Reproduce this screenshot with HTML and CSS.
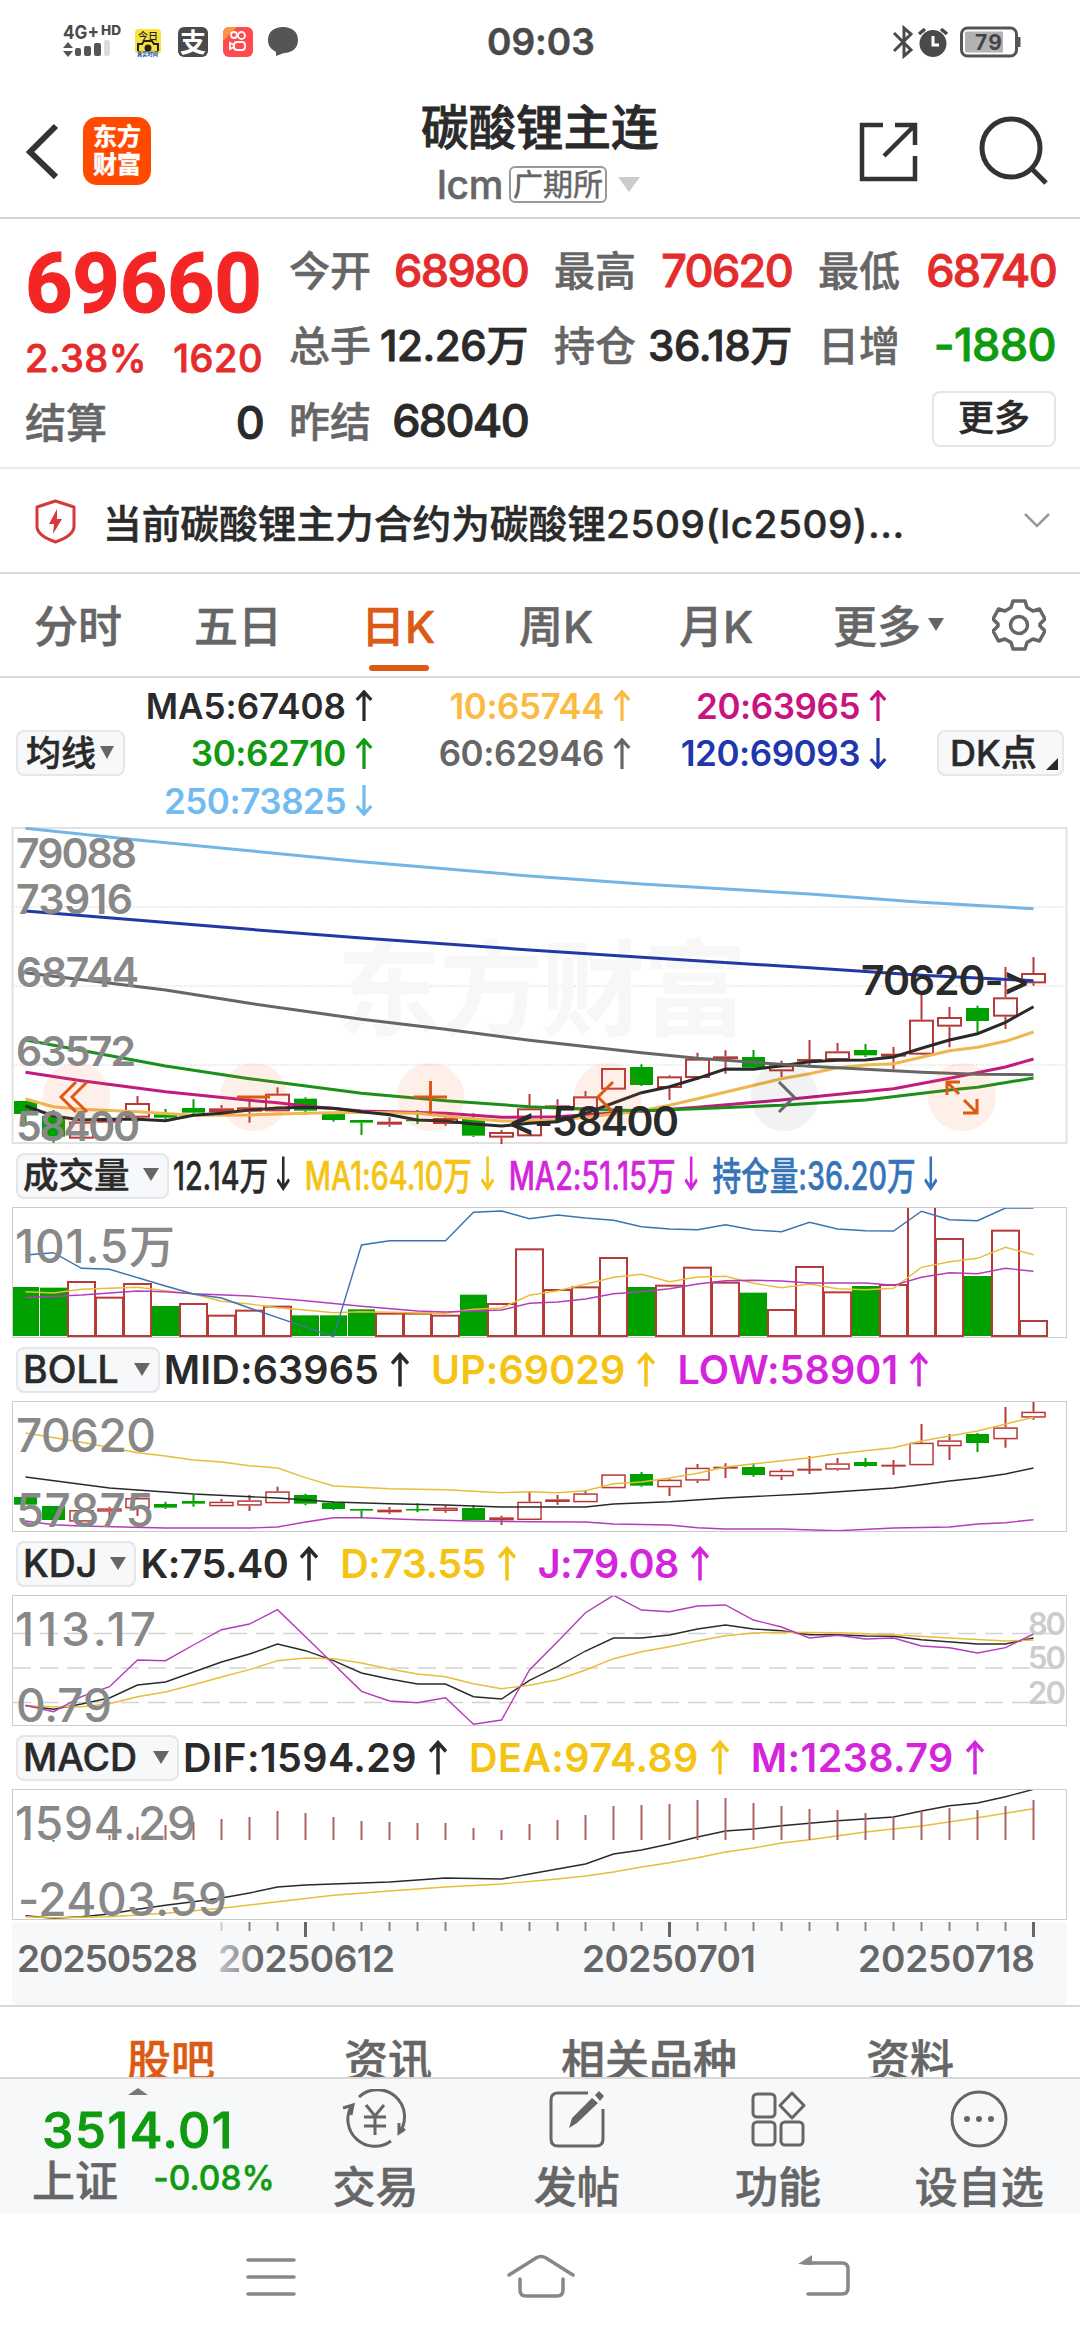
FILE: index.html
```html
<!DOCTYPE html>
<html lang="zh-CN">
<head>
  <meta charset="UTF-8">
  <meta name="viewport" content="width=device-width, initial-scale=1.0">
  <title>碳酸锂主连 - 东方财富</title>
  <link rel="stylesheet" href="styles.css">
</head>
<body>
  <svg class="defs">
    <symbol id="up" viewBox="0 0 18 34"><path d="M9 34V2M1 11L9 2L17 11"/></symbol>
    <symbol id="down" viewBox="0 0 18 34"><path d="M9 0V32M1 23L9 32L17 23"/></symbol>
  </svg>

  <div class="statusbar">
    <svg class="status-left" viewBox="62 18 240 42">
      <text class="st-net" x="63" y="39" textLength="36" lengthAdjust="spacingAndGlyphs">4G+</text>
      <text class="st-hd" x="101" y="35" textLength="20" lengthAdjust="spacingAndGlyphs">HD</text>
      <path fill="#555" d="M63 48L68 42L73 48zM63 51L68 57L73 51z"/>
      <rect x="75" y="48" width="6" height="8" rx="2" fill="#555"/>
      <rect x="84" y="46" width="7" height="10" rx="2" fill="#555"/>
      <rect x="94" y="43" width="7" height="13" rx="2" fill="#555"/>
      <rect x="104" y="40" width="6" height="16" rx="2" fill="#ddd"/>
      <rect x="135" y="29" width="26" height="25" rx="4" fill="#f7e23c"/>
      <text class="st-today" x="138" y="40">今日</text>
      <path d="M138 51v-7h4l2-3h8l2 3h4v7" fill="none" stroke="#222" stroke-width="2"/>
      <circle cx="148" cy="48" r="3.5" fill="#222"/>
      <text class="st-water" x="137" y="56" textLength="21" lengthAdjust="spacingAndGlyphs">真实时间</text>
      <rect x="178" y="27" width="30" height="30" rx="6" fill="#4a4a4a"/>
      <text class="st-pay" x="180" y="52">支</text>
      <rect x="223" y="27" width="30" height="30" rx="6" fill="#ff4a4e"/>
      <path d="M223 41V33a6 6 0 0 1 6-6h8z" fill="#ff9440"/>
      <g fill="none" stroke="#fff" stroke-width="1.8"><circle cx="234" cy="35" r="3"/><circle cx="241.500" cy="35.500" r="3.500"/><rect x="234" y="42" width="11" height="8" rx="3"/><path d="M234 45l-4-2v6l4-2"/></g>
      <path fill="#555" d="M283 27c9 0 15 5 15 13s-6 13-14 13l-8 3v-4c-5-3-8-6-8-12c0-8 6-13 15-13z"/>
    </svg>
    <div class="clock">09:03</div>
    <svg class="status-right" viewBox="892 18 130 42">
      <path d="M894 33l17 17l-7 6V28l7 6l-17 17" fill="none" stroke="#4a4a4a" stroke-width="3"/>
      <circle cx="933" cy="43.500" r="13.500" fill="#4a4a4a"/>
      <path d="M919 34l6-5M947 34l-6-5" stroke="#4a4a4a" stroke-width="3.500"/>
      <path d="M933 36v9h6" fill="none" stroke="#fff" stroke-width="3"/>
      <rect x="961.500" y="28" width="55" height="28" rx="6" fill="none" stroke="#555" stroke-width="3"/>
      <path d="M1003 31.500H967q-2 0-2 2v17q0 2 2 2h36z" fill="#b2b2b2"/>
      <rect x="1018" y="37" width="2.500" height="10" fill="#555"/>
      <text class="st-batt" x="975" y="50" textLength="27">79</text>
    </svg>
  </div>

  <div class="header">
    <svg class="back" viewBox="26 122 36 60"><path d="M56 126L30 152L56 177" fill="none" stroke="#333" stroke-width="6"/></svg>
    <div class="logo">东方<br>财富</div>
    <div class="title">
      <div class="name">碳酸锂主连</div>
      <div class="code">lcm<span class="market">广期所</span><span class="tri-light"></span></div>
    </div>
    <svg class="share" viewBox="855 120 62 62">
      <path d="M881 125H860V179H913V156M893 125H913V145M882 156L912 126" fill="none" stroke="#333" stroke-width="4.500"/>
    </svg>
    <svg class="search" viewBox="975 114 74 74">
      <circle cx="1009" cy="148" r="29" fill="none" stroke="#333" stroke-width="5"/>
      <path d="M1030 169L1044 183" stroke="#333" stroke-width="5"/>
    </svg>
  </div>

  <div class="quote">
    <div class="q-left">
      <div class="price">69660</div>
      <div class="change"><span>2.38%</span><span>1620</span></div>
      <div class="cell settle"><label>结算</label><b>0</b></div>
    </div>
    <div class="q-grid">
      <div class="cell"><label>今开</label><b class="red">68980</b></div>
      <div class="cell"><label>最高</label><b class="red">70620</b></div>
      <div class="cell"><label>最低</label><b class="red">68740</b></div>
      <div class="cell"><label>总手</label><b class="wan">12.26万</b></div>
      <div class="cell"><label>持仓</label><b class="wan">36.18万</b></div>
      <div class="cell"><label>日增</label><b class="green">-1880</b></div>
      <div class="cell"><label>昨结</label><b>68040</b></div>
      <div></div>
      <div class="cell right"><div class="more">更多</div></div>
    </div>
  </div>

  <div class="notice">
    <svg class="shield" viewBox="34 496 42 48">
      <path d="M55.500 500L74 506V526Q73 535 55.500 541Q38 535 37 526V506z" fill="none" stroke="#d13b3b" stroke-width="3" stroke-linejoin="round"/>
      <path d="M57 508L49 523h5l-1 10l9-15h-5z" fill="#d13b3b"/>
    </svg>
    <div class="notice-text">当前碳酸锂主力合约为碳酸锂<span>2509(lc2509)...</span></div>
    <svg class="chev" viewBox="0 0 28 18"><path d="M2 2L14 14L26 2" fill="none" stroke="#999" stroke-width="2.500"/></svg>
  </div>

  <div class="periods">
    <div>分时</div>
    <div>五日</div>
    <div class="active">日K</div>
    <div>周K</div>
    <div>月K</div>
    <div>更多<span class="tri"></span></div>
    <svg class="gear" viewBox="-27 -27 54 54">
      <path d="M-6 -24H6L8 -17.500L14 -14L20.500 -16L26 -6L21 -1V1L26 6L20.500 16L14 14L8 17.500L6 24H-6L-8 17.500L-14 14L-20.500 16L-26 6L-21 1V-1L-26 -6L-20.500 -16L-14 -14L-8 -17.500z" fill="none" stroke="#666" stroke-width="3.500" stroke-linejoin="round"/>
      <circle r="8.500" fill="none" stroke="#666" stroke-width="3.500"/>
    </svg>
  </div>

  <div class="ma">
    <div class="pill ma-pill">均线<span class="tri"></span></div>
    <div class="ma-grid">
      <div class="c-black">MA5:67408<svg class="arrow"><use href="#up"/></svg></div>
      <div class="c-orange">10:65744<svg class="arrow"><use href="#up"/></svg></div>
      <div class="c-pink">20:63965<svg class="arrow"><use href="#up"/></svg></div>
      <div class="c-green">30:62710<svg class="arrow"><use href="#up"/></svg></div>
      <div class="c-gray">60:62946<svg class="arrow"><use href="#up"/></svg></div>
      <div class="c-blue">120:69093<svg class="arrow"><use href="#down"/></svg></div>
      <div class="c-sky">250:73825<svg class="arrow"><use href="#down"/></svg></div>
    </div>
    <div class="pill dk-pill">DK点<span class="corner"></span></div>
  </div>

  <svg class="chart" id="kline" height="317" viewBox="0 827 1080 317">
    <rect x="12.500" y="828" width="1054" height="315" class="frame"/>
    <path d="M13 907H1066M13 986H1066M13 1065H1066" class="dots"/>
    <text class="mark" x="337" y="1028" textLength="410">东方财富</text>
    <g class="plot"></g>
    <g class="tools">
      <circle cx="76.500" cy="1097" r="34"/><circle cx="254" cy="1097" r="34"/><circle cx="430.500" cy="1097" r="34"/>
      <circle cx="608" cy="1097" r="34"/><circle cx="784.500" cy="1097" r="34" class="off"/><circle cx="962" cy="1097" r="34"/>
      <path d="M76 1082L61 1097L76 1112M87 1082L72 1097L87 1112M237 1097H270M414 1097H447M430.500 1081V1114M613 1082L598 1097L613 1112M947 1095V1082H960M947 1082L959 1094M964 1100L977 1113M977 1099V1113H963"/>
      <path class="next" d="M779 1082L794 1097L779 1112"/>
    </g>
    <g class="axis-y">
      <text x="16" y="868" textLength="121">79088</text>
      <text x="16" y="914" textLength="117">73916</text>
      <text x="16" y="987" textLength="123">68744</text>
      <text x="16" y="1066" textLength="120">63572</text>
      <text x="16" y="1141" textLength="124">58400</text>
    </g>
    <g class="peak">
      <text x="508" y="1136" textLength="171">&lt;-58400</text>
      <text x="861" y="995" textLength="169">70620-&gt;</text>
    </g>
  </svg>

  <div class="ind ind-vol">
    <div class="pill">成交量<span class="tri"></span></div>
    <div class="squeeze">
      <span class="c-black">12.14万<svg class="arrow"><use href="#down"/></svg></span>
      <span class="c-yellow">MA1:64.10万<svg class="arrow"><use href="#down"/></svg></span>
      <span class="c-purple">MA2:51.15万<svg class="arrow"><use href="#down"/></svg></span>
      <span class="c-steel">持仓量:36.20万<svg class="arrow"><use href="#down"/></svg></span>
    </div>
  </div>
  <svg class="chart" id="vol" height="131" viewBox="0 1207 1080 131">
    <g class="plot"></g>
    <rect x="12.500" y="1207.500" width="1054" height="130" class="frame2"/>
    <text class="big" x="15" y="1263" textLength="160">101.5万</text>
  </svg>

  <div class="ind">
    <div class="pill">BOLL<span class="tri"></span></div>
    <span class="c-black">MID:63965<svg class="arrow"><use href="#up"/></svg></span>
    <span class="c-yellow">UP:69029<svg class="arrow"><use href="#up"/></svg></span>
    <span class="c-purple">LOW:58901<svg class="arrow"><use href="#up"/></svg></span>
  </div>
  <svg class="chart" id="boll" height="131" viewBox="0 1401 1080 131">
    <g class="plot"></g>
    <rect x="12.500" y="1401.500" width="1054" height="130" class="frame2"/>
    <text class="big" x="16" y="1452" textLength="140">70620</text>
    <text class="big" x="16" y="1527" textLength="138">57875</text>
  </svg>

  <div class="ind ind-kdj">
    <div class="pill">KDJ<span class="tri"></span></div>
    <span class="c-black">K:75.40<svg class="arrow"><use href="#up"/></svg></span>
    <span class="c-yellow">D:73.55<svg class="arrow"><use href="#up"/></svg></span>
    <span class="c-purple">J:79.08<svg class="arrow"><use href="#up"/></svg></span>
  </div>
  <svg class="chart" id="kdj" height="131" viewBox="0 1595 1080 131">
    <path d="M13 1633.500H1066M13 1668H1066M13 1702.500H1066" class="dash"/>
    <g class="level">
      <text x="1028" y="1635" textLength="38">80</text>
      <text x="1028" y="1669" textLength="38">50</text>
      <text x="1028" y="1704" textLength="38">20</text>
    </g>
    <g class="plot"></g>
    <rect x="12.500" y="1595.500" width="1054" height="130" class="frame2"/>
    <text class="big" x="15" y="1646" textLength="141">113.17</text>
    <text class="big" x="16" y="1722" textLength="96">0.79</text>
  </svg>

  <div class="ind ind-macd">
    <div class="pill">MACD<span class="tri"></span></div>
    <span class="c-black">DIF:1594.29<svg class="arrow"><use href="#up"/></svg></span>
    <span class="c-yellow">DEA:974.89<svg class="arrow"><use href="#up"/></svg></span>
    <span class="c-purple">M:1238.79<svg class="arrow"><use href="#up"/></svg></span>
  </div>
  <svg class="chart" id="macd" height="131" viewBox="0 1789 1080 131">
    <g class="plot"></g>
    <rect x="12.500" y="1789.500" width="1054" height="130" class="frame2"/>
    <text class="big" x="15" y="1840" textLength="181">1594.29</text>
    <text class="big" x="18" y="1916" textLength="209">-2403.59</text>
  </svg>

  <svg class="chart" id="dates" height="85" viewBox="0 1920 1080 85">
    <defs><linearGradient id="fade" gradientUnits="userSpaceOnUse" x1="215" x2="262" y1="0" y2="0"><stop offset="0" stop-color="#ccc"/><stop offset="1" stop-color="#666"/></linearGradient></defs>
    <rect x="12" y="1922" width="1055" height="83" fill="#f7f8fa"/>
    <g class="plot"></g>
    <g class="date">
      <text x="17" y="1972" textLength="181">20250528</text>
      <text x="218" y="1972" textLength="177" fill="url(#fade)">20250612</text>
      <text x="582" y="1972" textLength="174">20250701</text>
      <text x="858" y="1972" textLength="177">20250718</text>
    </g>
  </svg>

  <div class="subtabs">
    <div class="active">股吧</div>
    <div>资讯</div>
    <div>相关品种</div>
    <div>资料</div>
  </div>

  <div class="toolbar">
    <div class="index">
      <span class="tri-up"></span>
      <div class="idx-val">3514.01</div>
      <div class="idx-row">上证<span>-0.08%</span></div>
    </div>
    <div class="tool">
      <svg viewBox="-34 -30 68 60"><path d="M-16 -22A27 27 0 0 1 24 14M16 22A27 27 0 0 1 -23 -14M-32 -11L-22 -14L-24 -4M30 10L24 14L24 4M-9 -14L0 -3L9 -14M0 -3V16M-11 -2H11M-11 7H11"/></svg>
      <div>交易</div>
    </div>
    <div class="tool">
      <svg viewBox="-34 -30 68 60"><path d="M11 -26H-19Q-26 -26-26 -19V20Q-26 27-19 27H19Q26 27 26 20V-10"/><path class="fill" d="M-8 9L-5 -1L15 -21L21 -16L0 4zM18 -24L22 -28L27 -23L23 -18z"/></svg>
      <div>发帖</div>
    </div>
    <div class="tool">
      <svg viewBox="-34 -30 68 60"><rect x="-25" y="-25" width="22" height="23" rx="4"/><rect x="-25" y="3" width="22" height="23" rx="4"/><rect x="3" y="3" width="22" height="23" rx="4"/><path d="M14 -26L26 -13.500L14 -1L2 -13.500z" stroke-linejoin="round"/></svg>
      <div>功能</div>
    </div>
    <div class="tool">
      <svg viewBox="-34 -30 68 60"><circle r="27"/><g class="fill"><circle cx="-12" r="3"/><circle r="3"/><circle cx="12" r="3"/></g></svg>
      <div>设自选</div>
    </div>
  </div>

  <div class="navbar">
    <svg viewBox="0 0 1080 126">
      <path d="M248 46H294M248 63H294M248 80H294M509 61L536 44Q541 41 546 44L573 61M520 65V76Q520 82 526 82H557Q563 82 563 76V65M808 80H842Q848 80 848 74V55Q848 49 842 49H804"/>
      <path d="M798 50L812 41V51z" fill="#888" stroke="none"/>
    </svg>
  </div>

  <script src="charts.js"></script>
</body>
</html>
```
FILE: styles.css
```css
* {
  box-sizing: border-box;
}
body {
  margin: 0;
  width: 1080px;
  height: 2340px;
  overflow: hidden;
  background: #fff;
  color: #2a2a2a;
  font-family: Inter, "Noto Sans CJK SC", sans-serif;
  font-weight: 500;
  font-feature-settings: "calt" 0;
  -webkit-text-stroke: .5px;
}
svg {
  display: block;
}
svg text {
  -webkit-text-stroke: 0;
}
.defs {
  width: 0;
  height: 0;
  position: absolute;
}

/* status bar */
.statusbar {
  height: 80px;
  padding: 18px 58px 0 62px;
  display: flex;
  justify-content: space-between;
}
.status-left {
  width: 240px;
  height: 42px;
}
.status-right {
  width: 130px;
  height: 42px;
}
.clock {
  width: 112px;
  margin-left: 66px;
  margin-right: 174px;
  font-size: 37px;
  line-height: 48px;
  font-weight: 600;
  color: #4a4a4a;
  white-space: nowrap;
}
.st-net { font: 700 19px Inter; fill: #4a4a4a; }
.st-hd { font: 800 13px Inter; fill: #4a4a4a; }
.st-today { font: 500 10px "Noto Sans CJK SC"; fill: #222; }
.st-water { font: 700 6px "Noto Sans CJK SC"; fill: #1450c8; }
.st-pay { font: 700 26px "Noto Sans CJK SC"; fill: #fff; }
.st-batt { font: 700 21px Inter; fill: #444; }

/* header */
.header {
  height: 139px;
  border-bottom: 2px solid #d5d5d5;
  display: flex;
  align-items: flex-start;
}
.back {
  width: 36px;
  height: 60px;
  margin: 42px 21px 0 26px;
}
.logo {
  width: 68px;
  height: 68px;
  margin-top: 37px;
  padding-top: 6px;
  border-radius: 14px;
  background: #ff4a00;
  color: #fff;
  font-weight: 700;
  font-size: 24px;
  line-height: 28px;
  text-align: center;
}
.title {
  width: 706px;
  padding-top: 20px;
}
.name {
  margin-left: 270px;
  font-size: 47.5px;
  line-height: 56px;
  font-weight: 500;
  -webkit-text-stroke: .8px;
}
.code {
  display: flex;
  align-items: center;
  height: 54px;
  margin-left: 286px;
  padding-top: 3px;
  font-size: 39px;
  color: #666;
  letter-spacing: -.3px;
}
.market {
  margin-left: 6px;
  width: 98px;
  height: 37px;
  border: 2px solid #999;
  border-radius: 6px;
  font-size: 30px;
  line-height: 32px;
  text-align: center;
  letter-spacing: 0;
  font-weight: 400;
}
.tri-light {
  margin-left: 11px;
  border: 11px solid transparent;
  border-top: 15px solid #ccc;
  border-bottom: 0;
}
.share {
  width: 62px;
  height: 62px;
  margin-top: 40px;
}
.search {
  width: 74px;
  height: 74px;
  margin: 34px 0 0 58px;
}

/* quote */
.quote {
  height: 250px;
  border-bottom: 2px solid #ececec;
  padding: 12px 24px 0 25px;
  display: flex;
  gap: 26px;
}
.q-left {
  width: 238px;
}
.price {
  height: 102px;
  line-height: 106px;
  font-family: Roboto, sans-serif;
  font-size: 83px;
  font-weight: 700;
  letter-spacing: -.3px;
  color: #f32525;
  -webkit-text-stroke: 1px;
}
.change {
  display: flex;
  justify-content: space-between;
  height: 50px;
  line-height: 50px;
  font-size: 38px;
  letter-spacing: .5px;
  color: #e42c2c;
  -webkit-text-stroke: .8px;
}
.q-grid {
  display: grid;
  grid-template-columns: 239px 238px 238px;
  grid-template-rows: 74px 75px 77px;
  column-gap: 26px;
}
.cell {
  display: flex;
  justify-content: space-between;
  align-items: center;
}
.cell label {
  font-size: 41px;
  color: #666;
}
.cell b {
  font-weight: 500;
  font-size: 45px;
  letter-spacing: -1.7px;
  padding-top: 4px;
  -webkit-text-stroke: .9px;
}
.cell .wan {
  font-size: 42px;
  letter-spacing: -.4px;
  padding-top: 0;
}
.cell .green {
  letter-spacing: -.6px;
}
.settle {
  height: 74px;
}
.right {
  justify-content: flex-end;
}
.more {
  width: 124px;
  height: 56px;
  border: 2px solid #e6e6e6;
  border-radius: 8px;
  font-size: 36px;
  line-height: 50px;
  text-align: center;
}
.red { color: #e42c2c; }
.green { color: #0f9a0f; }

/* notice */
.notice {
  height: 105px;
  border-bottom: 2px solid #d8d8d8;
  padding: 0 29px 0 34px;
  display: flex;
  align-items: center;
}
.shield {
  width: 42px;
  height: 48px;
}
.notice-text {
  flex: 1;
  margin-left: 27px;
  font-size: 38.7px;
  white-space: nowrap;
}
.notice-text span {
  letter-spacing: .6px;
}
.chev {
  width: 28px;
  height: 18px;
}

/* period tabs */
.periods {
  height: 104px;
  border-bottom: 2px solid #d8d8d8;
  padding-left: 34px;
  display: grid;
  grid-template-columns: 160px 167px 158px 160px 154px 159px 54px;
  font-size: 44px;
  line-height: 106px;
  color: #666;
}
.periods .active {
  position: relative;
  color: #dc5a14;
}
.periods .active::after {
  content: "";
  position: absolute;
  left: 8px;
  bottom: 9px;
  width: 60px;
  height: 6px;
  border-radius: 3px;
  background: #dc5a14;
}
.gear {
  width: 54px;
  height: 54px;
  margin-top: 24px;
}
.tri {
  display: inline-block;
  border: 8px solid transparent;
  border-top: 13px solid #666;
  border-bottom: 0;
  margin-left: 10px;
  vertical-align: 7px;
}
.periods .tri {
  margin-left: 7px;
  vertical-align: 12px;
}

/* moving averages */
.ma {
  height: 149px;
  padding: 4px 15px 0 16px;
  display: flex;
}
.pill {
  height: 46px;
  border: 2px solid #e4e6ea;
  border-radius: 8px;
  background: #f7f8fa;
  font-size: 37.5px;
  line-height: 42px;
  padding: 0 8px 0 5px;
  color: #2a2a2a;
  white-space: nowrap;
}
.ma-pill {
  width: 109px;
  margin-top: 48px;
  font-size: 35px;
  padding: 0 0 0 8px;
}
.ma-pill .tri {
  border-left-width: 7px;
  border-right-width: 7px;
  margin-left: 4px;
}
.ma-grid {
  width: 761px;
  display: grid;
  grid-template-columns: 248px 258px 256px;
  grid-auto-rows: 47.6px;
}
.ma-grid div {
  display: flex;
  justify-content: flex-end;
  align-items: center;
  font-size: 35px;
  font-weight: 600;
  letter-spacing: -.45px;
  -webkit-text-stroke: 0;
}
.ma-grid .c-black {
  letter-spacing: 0;
}
.dk-pill {
  position: relative;
  width: 127px;
  margin: 48px 0 0 51px;
  padding-left: 11px;
  font-size: 36px;
}
.corner {
  position: absolute;
  right: 4px;
  bottom: 4px;
  border-left: 12px solid transparent;
  border-bottom: 12px solid #2a2a2a;
}
.arrow {
  display: inline-block;
  width: 18px;
  height: 31px;
  margin-left: 9px;
  fill: none;
  stroke: currentColor;
  stroke-width: 3.5px;
}
.c-black { color: #2a2a2a; }
.c-orange { color: #fbba42; }
.c-pink { color: #c8147c; }
.c-green { color: #0f9a0f; }
.c-gray { color: #666; }
.c-blue { color: #1f37ac; }
.c-sky { color: #72bbf0; }
.c-yellow { color: #f4c314; }
.c-purple { color: #d425dc; }
.c-steel { color: #3674b8; }

/* indicator rows */
.ind {
  height: 63px;
  padding-left: 16px;
  display: flex;
  align-items: center;
  font-size: 39.5px;
}
.ind .tri {
  margin-left: 15px;
}
.ind > span {
  margin-left: 4px;
  margin-right: 18px;
  display: flex;
  align-items: center;
  white-space: nowrap;
  font-weight: 600;
  letter-spacing: .1px;
  -webkit-text-stroke: 0;
}
.ind .arrow {
  height: 35px;
  margin-left: 12px;
}
.ind-kdj > span {
  letter-spacing: -.55px;
}
.ind-kdj .tri {
  margin-left: 13px;
}
.ind-macd .tri {
  margin-left: 16px;
}
.ind-macd > span {
  letter-spacing: .4px;
}
.ind-vol {
  font-size: 39px;
}
.ind-vol .pill {
  font-size: 35.5px;
}
.ind-vol .tri {
  margin-left: 13px;
}
.squeeze {
  margin: -5px 0 0 4px;
  display: flex;
  gap: 20px;
  white-space: nowrap;
  transform: scaleX(.735);
  transform-origin: 0 50%;
}
.squeeze span {
  display: flex;
  align-items: center;
}

/* charts */
.chart {
  width: 1080px;
}
.chart text {
  font-family: Inter, "Noto Sans CJK SC", sans-serif;
  font-weight: 600;
}
.frame { fill: none; stroke: #e2e2e2; stroke-width: 2px; }
.frame2 { fill: none; stroke: #ccc; }
.dots { stroke: #ddd; stroke-dasharray: 2 1; }
.dash { stroke: #d4d4d4; stroke-width: 1.5px; stroke-dasharray: 18 9; }
.chart .mark { font-size: 104px; font-weight: 700; fill: #f7f7f7; }
.tools circle { fill: rgba(255, 100, 40, .1); }
.tools .off { fill: rgba(0, 0, 0, .05); }
.tools path { fill: none; stroke: #dc5a14; stroke-width: 3px; }
.tools .next { stroke: #666; }
.axis-y text { font-size: 41px; fill: #888; }
.peak text { font-size: 41px; fill: #2a2a2a; }
.chart .big { font-size: 46px; fill: #888; font-weight: 500; -webkit-text-stroke: 1px #888; }
.level text { font-size: 31px; fill: #ccc; }
.date text { font-size: 37px; }
.date { fill: #666; }

/* sub tabs */
.subtabs {
  height: 74px;
  overflow: hidden;
  border-top: 2px solid #d8d8d8;
  border-bottom: 2px solid #d8d8d8;
  padding-left: 127px;
  display: flex;
  gap: 129px;
  font-size: 44px;
  line-height: 108px;
  color: #666;
}
.subtabs .active {
  color: #dc5a14;
}

/* bottom toolbar */
.toolbar {
  height: 135px;
  background: #f7f8fa;
  display: flex;
  color: #666;
}
.index {
  width: 275px;
  position: relative;
  padding-top: 24px;
}
.tri-up {
  position: absolute;
  left: 128px;
  top: 9px;
  border: 10px solid transparent;
  border-bottom: 7px solid #777;
  border-top: 0;
}
.idx-val {
  padding-left: 42px;
  font-size: 50px;
  line-height: 54px;
  letter-spacing: 1.6px;
  color: #0f9a0f;
  -webkit-text-stroke: .9px;
}
.idx-row {
  display: flex;
  align-items: center;
  justify-content: space-between;
  padding-left: 32px;
  height: 42px;
  font-size: 43px;
}
.idx-row span {
  font-size: 33.5px;
  color: #0f9a0f;
}
.tool {
  width: 201.5px;
  padding-top: 10px;
  font-size: 43px;
  line-height: 76px;
  text-align: center;
}
.tool svg {
  width: 68px;
  height: 60px;
  margin: 0 auto;
  fill: none;
  stroke: #666;
  stroke-width: 3px;
}
.tool .fill {
  fill: #666;
  stroke: none;
}
.navbar svg {
  width: 1080px;
  height: 126px;
  fill: none;
  stroke: #888;
  stroke-width: 3.5px;
  stroke-linecap: round;
}
```
FILE: charts.js
```js
// series are [index, y, index, y, ...]; y counts in thirds of a pixel from the base of the panel
var NS = "http://www.w3.org/2000/svg";
var STEP = 28;
var LEFT = 25.5;
var RED = "#b83a38";
var GREEN = "#00a000";

function add(id, tag, attrs) {
  var el = document.createElementNS(NS, tag);
  for (var k in attrs) el.setAttribute(k, attrs[k]);
  document.querySelector("#" + id + " .plot").appendChild(el);
}

function px(i) { return LEFT + i * STEP; }

function line(id, base, color, width, data) {
  var pts = [];
  for (var n = 0; n < data.length; n += 2) {
    pts.push(px(data[n]) + "," + (base + data[n + 1] / 3).toFixed(1));
  }
  add(id, "polyline", { points: pts.join(" "), fill: "none", stroke: color, "stroke-width": width });
}

// each candle: kind, body top, body bottom, high, low
function candles(id, base, sw, rows) {
  rows.forEach(function (r, i) {
    var x = px(i), color = r[0] == "g" ? GREEN : RED;
    var y1 = base + r[1] / 3, y2 = base + r[2] / 3;
    var hi = base + (r[3] || r[1]) / 3, lo = base + (r[4] || r[2]) / 3;
    add(id, "path", { d: "M" + x + " " + hi + "V" + y1 + "M" + x + " " + y2 + "V" + lo, stroke: color, "stroke-width": 2 });
    if (r[0] == "g") {
      add(id, "rect", { x: x - 11.5, y: y1, width: 23, height: Math.max(y2 - y1, 1.5), fill: color });
    } else {
      add(id, "rect", { x: x - 11.5, y: y1 + sw / 2, width: 23, height: Math.max(y2 - y1 - sw, .5), fill: "#fff", stroke: color, "stroke-width": sw });
    }
  });
}

candles("kline", 820, 2, [
  ["g", 843, 882, 843, 910], ["g", 888, 950, 870, 968], ["r", 905, 956], ["r", 898, 908, 885, 935], ["r", 849, 893, 828, 905],
  ["g", 883, 893, 867, 897], ["g", 864, 878, 838, 883], ["r", 865, 877, 855, 880], ["r", 862, 875, 835, 908], ["r", 821, 874, 802, 874],
  ["g", 836, 872, 832, 885], ["g", 880, 900, 880, 905], ["g", 900, 908, 900, 945], ["r", 905, 914, 892, 920], ["g", 899, 903, 870, 912],
  ["r", 894, 912, 888, 917], ["g", 895, 947, 880, 951], ["r", 936, 953, 930, 972], ["r", 865, 949, 822, 949], ["r", 856, 864, 838, 878],
  ["r", 829, 868, 813, 868], ["r", 744, 809], ["g", 741, 795, 733, 798], ["r", 769, 804, 766, 840], ["r", 716, 774, 698, 780],
  ["r", 709, 717, 691, 761], ["g", 711, 743, 690, 745], ["r", 736, 754, 722, 771], ["r", 717, 723, 660, 735], ["r", 694, 720, 669, 720],
  ["g", 690, 706, 672, 711], ["r", 701, 710, 681, 747], ["r", 599, 704, 525, 705], ["r", 591, 620, 561, 682], ["g", 564, 603, 557, 638],
  ["r", 532, 590, 441, 627], ["r", 459, 490, 411, 497]
]);
line("kline", 820, "#72b6e6", 3, [0, 25, 4, 60, 8, 92, 12, 125, 18, 168, 22, 192, 28, 222, 32, 247, 36, 266]);
line("kline", 820, "#2238a4", 3, [0, 273, 8, 328, 12, 354, 18, 390, 22, 412, 28, 443, 32, 466, 36, 482]);
line("kline", 820, "#c01c80", 3, [0, 757, 2, 782, 5, 815, 8, 841, 9, 848, 10, 858, 12, 873, 15, 880, 17, 892, 19, 890, 20, 884, 22, 874, 24, 862, 27, 840, 31, 806, 33, 775, 35, 741, 36, 717]);
line("kline", 820, "#eeb750", 3, [0, 837, 1, 860, 2, 868, 4, 875, 6, 886, 8, 885, 10, 880, 12, 877, 14, 880, 16, 896, 17, 903, 19, 901, 20, 892, 21, 882, 22, 872, 23, 856, 24, 836, 27, 776, 28, 761, 29, 743, 30, 735, 31, 731, 33, 692, 34, 682, 35, 664, 36, 636]);
line("kline", 820, "#1a9018", 3, [0, 660, 5, 738, 8, 776, 12, 820, 15, 842, 18, 860, 20, 868, 22, 872, 24, 866, 27, 856, 30, 840, 33, 810, 34, 802, 36, 774]);
line("kline", 820, "#2a2a2a", 3, [0, 858, 1, 888, 2, 900, 3, 898, 4, 898, 5, 902, 6, 886, 7, 880, 8, 870, 9, 864, 10, 862, 11, 865, 12, 875, 13, 884, 14, 900, 15, 903, 16, 912, 17, 918, 18, 910, 19, 905, 20, 880, 21, 849, 22, 818, 23, 800, 24, 775, 25, 747, 26, 748, 27, 737, 28, 725, 29, 721, 30, 720, 31, 711, 32, 685, 33, 660, 34, 641, 35, 607, 36, 560]);
line("kline", 820, "#666", 3, [0, 458, 5, 510, 8, 550, 12, 598, 15, 628, 18, 661, 22, 698, 24, 715, 28, 739, 32, 757, 34, 763, 36, 764]);

// volume bars
var vol = "g411 g413 r396 r443 r402 g468 r462 r497 r482 r470 g496 g496 g478 r491 r491 r497 g434 r462 r298 r420 r412 r324 g411 r407 r353 r398 g428 r480 r351 r427 g408 r405 r160 r267 g378 r242 r513".split(" ");
vol.forEach(function (v, i) {
  var y = 1150 + v.slice(1) / 3, h = 1336 - y, x = Math.max(px(i) - 13.5, 13);
  if (v[0] == "g") {
    add("vol", "rect", { x: x, y: y, width: px(i) + 13.5 - x, height: h, fill: GREEN });
  } else {
    add("vol", "rect", { x: x, y: y, width: 27, height: h, fill: "#fff", stroke: RED, "stroke-width": 2 });
  }
});
line("vol", 1150, "#e8bd38", 1.4, [0, 425, 1, 429, 2, 418, 3, 415, 4, 412, 5, 422, 6, 432, 7, 454, 8, 462, 9, 473, 10, 480, 11, 488, 12, 485, 13, 487, 14, 489, 15, 490, 16, 478, 17, 474, 18, 436, 19, 422, 20, 403, 21, 382, 22, 373, 23, 395, 24, 381, 25, 379, 26, 400, 27, 413, 28, 402, 29, 416, 30, 419, 31, 415, 32, 352, 33, 335, 34, 325, 35, 292, 36, 314]);
line("vol", 1150, "#b43cba", 1.4, [0, 443, 2, 435, 4, 423, 5, 425, 6, 431, 8, 438, 10, 452, 12, 469, 14, 483, 15, 486, 17, 480, 18, 460, 19, 456, 20, 447, 21, 431, 22, 425, 23, 416, 24, 402, 25, 392, 26, 391, 27, 393, 28, 399, 30, 399, 31, 406, 32, 382, 33, 368, 34, 371, 35, 355, 36, 364]);
line("vol", 1150, "#3a74b0", 1.4, [0, 315, 1, 308, 2, 355, 3, 358, 5, 408, 6, 432, 7, 444, 8, 474, 11, 560, 12, 285, 13, 272, 15, 272, 16, 187, 17, 183, 18, 206, 19, 195, 20, 204, 21, 211, 22, 230, 23, 237, 24, 239, 25, 224, 26, 240, 27, 245, 28, 217, 29, 237, 30, 242, 31, 243, 32, 184, 33, 209, 34, 212, 35, 174, 36, 174]);

candles("boll", 1150, 1.5, [
  ["g", 1041, 1064], ["g", 1068, 1110], ["r", 1080, 1115], ["r", 1075, 1085, 1070, 1115], ["r", 1044, 1075, 1030, 1098],
  ["g", 1062, 1073, 1055, 1077], ["g", 1053, 1061, 1035, 1070], ["r", 1055, 1069, 1047], ["r", 1051, 1067, 1035, 1083], ["r", 1024, 1060, 1010],
  ["g", 1035, 1061, 1031, 1066], ["g", 1058, 1077, 1054, 1080], ["g", 1077, 1082, 1077, 1105], ["r", 1079, 1087, 1071, 1092], ["g", 1077, 1080, 1060, 1086],
  ["r", 1073, 1083, 1066, 1088], ["g", 1074, 1110, 1065, 1110], ["r", 1102, 1111, 1097, 1125], ["r", 1055, 1110, 1026], ["r", 1048, 1056, 1035, 1064],
  ["r", 1030, 1057, 1020], ["r", 973, 1015], ["g", 972, 1007, 966, 1010], ["r", 989, 1012, 987, 1038], ["r", 953, 992, 942, 999],
  ["r", 950, 955, 940, 984], ["g", 951, 975, 940, 980], ["r", 962, 979, 957, 990], ["r", 956, 958, 918, 972], ["r", 940, 959, 924, 962],
  ["g", 936, 948, 924, 951], ["r", 944, 949, 930, 975], ["r", 878, 946, 822], ["r", 871, 889, 852, 930], ["g", 852, 879, 849, 906],
  ["r", 832, 868, 771, 893], ["r", 785, 803, 755, 809]
]);
line("boll", 1150, "#e8bd38", 1.4, [0, 849, 2, 877, 4, 908, 5, 918, 6, 930, 7, 936, 8, 947, 9, 954, 10, 983, 11, 1008, 13, 1016, 15, 1019, 17, 1028, 18, 1025, 19, 1028, 20, 1022, 21, 1001, 22, 996, 23, 984, 24, 970, 25, 951, 28, 923, 29, 911, 31, 893, 32, 873, 34, 843, 36, 802]);
line("boll", 1150, "#2a2a2a", 1.4, [0, 981, 3, 1014, 6, 1032, 9, 1044, 11, 1056, 13, 1061, 15, 1065, 17, 1071, 20, 1071, 21, 1062, 23, 1055, 25, 1044, 28, 1031, 31, 1014, 32, 1004, 33, 993, 34, 984, 35, 972, 36, 954]);
line("boll", 1150, "#b43cba", 1.4, [0, 1113, 1, 1124, 2, 1128, 5, 1134, 8, 1134, 9, 1131, 10, 1116, 11, 1103, 12, 1103, 14, 1109, 16, 1113, 18, 1115, 20, 1116, 21, 1122, 23, 1125, 24, 1133, 25, 1137, 27, 1137, 29, 1142, 31, 1134, 33, 1131, 34, 1122, 35, 1118, 36, 1109]);

line("kdj", 1540, "#2a2a2a", 1.4, [0, 497, 1, 508, 2, 492, 3, 474, 4, 435, 5, 426, 7, 366, 8, 342, 9, 312, 10, 332, 11, 362, 12, 399, 13, 417, 14, 432, 15, 432, 16, 470, 17, 477, 18, 421, 19, 380, 20, 333, 21, 294, 22, 294, 23, 285, 24, 267, 25, 255, 26, 267, 27, 272, 28, 284, 29, 284, 30, 288, 31, 289, 32, 299, 34, 312, 35, 312, 36, 294]);
line("kdj", 1540, "#e8bd38", 1.4, [0, 497, 1, 500, 2, 500, 3, 491, 4, 470, 5, 456, 6, 434, 7, 411, 8, 389, 9, 362, 10, 354, 11, 356, 12, 369, 13, 387, 14, 402, 15, 410, 16, 431, 17, 446, 18, 436, 19, 419, 20, 390, 21, 356, 22, 335, 23, 320, 24, 303, 25, 287, 26, 279, 27, 277, 29, 278, 31, 284, 33, 294, 35, 303, 36, 300]);
line("kdj", 1540, "#b43cba", 1.4, [0, 496, 1, 515, 2, 470, 3, 440, 4, 360, 5, 362, 6, 315, 7, 269, 8, 252, 9, 209, 10, 290, 11, 372, 12, 454, 13, 483, 14, 488, 15, 473, 16, 553, 17, 540, 18, 390, 19, 305, 20, 218, 21, 166, 22, 210, 23, 215, 24, 198, 25, 195, 26, 240, 27, 261, 28, 294, 29, 286, 30, 297, 31, 294, 32, 318, 33, 323, 34, 339, 35, 323, 36, 282]);

// macd bars grow up from the zero line
var bars = [893, 905, 900, 885, 861, 855, 846, 837, 831, 813, 819, 831, 843, 846, 849, 849, 864, 870, 852, 840, 825, 798, 795, 792, 780, 774, 789, 798, 807, 810, 819, 831, 813, 804, 810, 798, 780];
line("macd", 1540, "#2a2a2a", 1.4, [0, 1127, 1, 1135, 2, 1130, 3, 1122, 4, 1108, 5, 1096, 6, 1085, 7, 1074, 8, 1059, 9, 1041, 10, 1035, 13, 1026, 15, 1014, 17, 1017, 18, 1002, 19, 987, 20, 972, 21, 942, 22, 930, 23, 912, 24, 891, 25, 873, 26, 867, 27, 857, 29, 842, 31, 831, 32, 813, 33, 797, 34, 789, 35, 770, 36, 748]);
line("macd", 1540, "#e8bd38", 1.4, [0, 1130, 1, 1133, 3, 1130, 5, 1120, 7, 1105, 9, 1085, 11, 1066, 13, 1053, 15, 1041, 17, 1032, 19, 1017, 20, 1008, 21, 996, 22, 981, 23, 968, 24, 953, 25, 936, 26, 924, 27, 909, 28, 899, 30, 876, 32, 858, 34, 833, 36, 806]);
bars.forEach(function (b, i) {
  add("macd", "path", { d: "M" + px(i) + " 1840V" + (1540 + b / 3), stroke: b > 900 ? GREEN : "#a86464", "stroke-width": 2 });
});

// date ticks
for (var i = 7; i <= 36; i++) {
  var major = i == 10 || i == 23 || i == 36;
  add("dates", "path", { d: "M" + px(i) + " 1922V" + (major ? 1937 : 1931), stroke: i == 7 ? "#ccc" : major ? "#666" : "#888", "stroke-width": major ? 3 : 2 });
}
```
